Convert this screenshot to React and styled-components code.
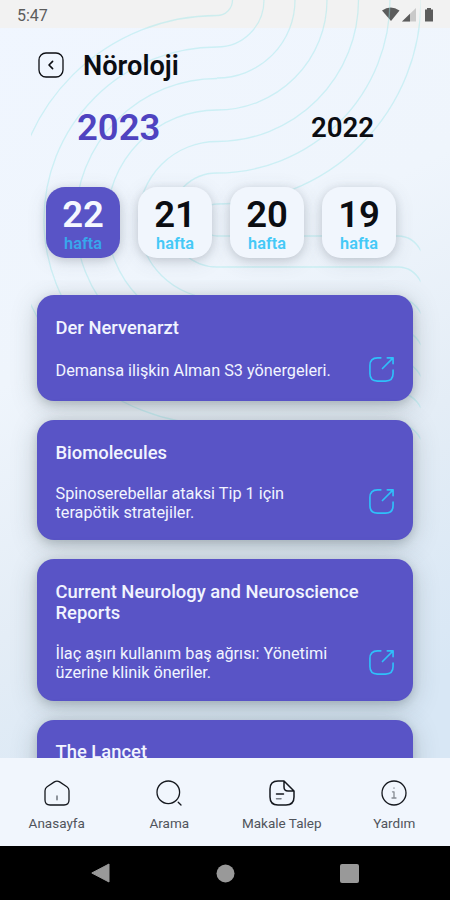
import React from "react";
import styled, { createGlobalStyle, css } from "styled-components";

const colors = {
  purple: "#5954c6",
  year: "#4f43c0",
  cyan: "#2fc0fa",
  ink: "#0b0d12",
  surface: "#f1f6fd",
};

const GlobalStyle = createGlobalStyle`
  * { box-sizing: border-box; }
  body { margin: 0; }
  button { border: 0; padding: 0; background: none; font: inherit; color: inherit; }
`;

const Screen = styled.div`
  position: relative;
  width: 450px;
  height: 900px;
  display: flex;
  flex-direction: column;
  overflow: hidden;
  font-family: Roboto, "Noto Sans", sans-serif;
  color: ${colors.ink};
  background: linear-gradient(152deg, #f0f6ff 0%, #eff5fc 34%, #e4edf6 56%, #d8e7f5 80%);
`;

const Backdrop = styled.svg`
  position: absolute;
  inset: 0;
  pointer-events: none;
`;

const StatusBar = styled.div`
  height: 28px;
  flex: none;
  display: flex;
  align-items: center;
  justify-content: space-between;
  padding: 2px 15px 0 17px;
  font-size: 16px;
  color: #5c5c5c;
  background: #f2f2f2;
`;

const StatusIcons = styled.svg`
  display: block;
  width: 53px;
  height: 16px;
`;

const Header = styled.header`
  position: relative;
  flex: none;
  height: 76px;
  display: flex;
  align-items: center;
  gap: 19px;
  padding: 0 0 0 38px;
`;

const BackButton = styled.button`
  width: 26px;
  height: 26px;
  margin-top: -3px;
  svg { display: block; }
`;

const Title = styled.h1`
  margin: 0;
  font-size: 27.2px;
  font-weight: 600;
  line-height: 32px;
`;

const Years = styled.div`
  position: relative;
  flex: none;
  height: 46px;
  display: flex;
  align-items: center;
  justify-content: space-between;
  padding: 0 76px 0 77px;
`;

const Year = styled.button`
  font-weight: 600;
  font-size: ${(p) => (p.$active ? 36.5 : 27.6)}px;
  color: ${(p) => (p.$active ? colors.year : colors.ink)};
`;

const Weeks = styled.div`
  position: relative;
  flex: none;
  height: 130px;
  margin: 0 37px 0 24px;
  padding: 37px 0 0 22px;
  display: flex;
  gap: 18px;
  overflow: hidden;
`;

const Week = styled.button`
  flex: none;
  width: 74px;
  height: 71px;
  border-radius: 19px;
  display: flex;
  flex-direction: column;
  align-items: center;
  padding-top: 8px;
  background: ${colors.surface};
  box-shadow: 0 2px 8px rgba(70, 80, 90, 0.2), 0 4px 20px rgba(70, 80, 90, 0.13);
  ${(p) =>
    p.$active &&
    css`
      background: ${colors.purple};
      color: #f5f8ff;
    `}
`;

const WeekNumber = styled.span`
  font-size: 36.5px;
  line-height: 40px;
  font-weight: 600;
`;

const WeekLabel = styled.span`
  font-size: 16.3px;
  line-height: 18px;
  font-weight: 600;
  color: ${(p) => (p.$active ? "#38a6ec" : "#45c9f7")};
`;

const Articles = styled.main`
  position: relative;
  flex: 1;
  min-height: 0;
  overflow: hidden;
  padding: 15px 37px 0;
  display: flex;
  flex-direction: column;
  gap: 19px;
`;

const Card = styled.article`
  flex: none;
  border-radius: 17px;
  padding: 21.5px 18px 18.4px 18.5px;
  color: #f1f4ff;
  background: ${colors.purple};
  box-shadow: 0 3px 9px rgba(55, 70, 75, 0.2), 0 5px 26px rgba(55, 70, 75, 0.26);
`;

const CardTitle = styled.h2`
  margin: 0 0 19px;
  font-size: 18.4px;
  line-height: 21.3px;
  font-weight: 500;
  white-space: pre-line;
`;

const CardBody = styled.div`
  display: flex;
  align-items: center;
  justify-content: space-between;
  min-height: 26px;
`;

const Summary = styled.p`
  margin: 0;
  padding-top: 2px;
  font-size: 16.25px;
  line-height: 19px;
  white-space: pre-line;
`;

const OpenButton = styled.button`
  flex: none;
  width: 27px;
  height: 27px;
  margin: -1px 0 -1px 0;
  color: ${colors.cyan};
  svg { display: block; }
`;

const TabBar = styled.nav`
  position: relative;
  flex: none;
  height: 88px;
  display: grid;
  grid-template-columns: repeat(4, 1fr);
  background: ${colors.surface};
`;

const Tab = styled.button`
  display: flex;
  flex-direction: column;
  align-items: center;
  gap: 8px;
  padding: 22px 0 0 1px;
  font-size: 13.5px;
  line-height: 18px;
  white-space: nowrap;
  color: #50545b;
  svg { display: block; color: #15181e; }
`;

const SystemBar = styled.div`
  position: relative;
  flex: none;
  height: 54px;
  background: #000;
  display: flex;
  justify-content: space-between;
  align-items: center;
  padding: 0 91px;
`;

const outline = {
  fill: "none",
  stroke: "currentColor",
  strokeLinecap: "round",
  strokeLinejoin: "round",
};

const DISCS = [15.5, 47, 78, 110, 141.5, 173, 204];
const LOOPS = [204.5, 173, 141.5, 110, 78.5, 47, 16];

function Waves() {
  return (
    <Backdrop width="450" height="900" viewBox="0 0 450 900">
      <defs>
        <clipPath id="waves">
          <rect x="31" y="0" width="389.5" height="500" />
        </clipPath>
      </defs>
      <g clipPath="url(#waves)" fill="none" stroke="#9be6ea" strokeOpacity="0.42" strokeWidth="1.3">
        {DISCS.map((r) => (
          <path key={r} d={`M${217 + r} 0A${r} ${r} 0 0 1 217 ${r}`} />
        ))}
        {LOOPS.map((r) => (
          <path key={r} d={`M217 ${220 - r}A${r} ${r} 0 0 0 217 ${220 + r}H398Q413 ${220 + r} 421 ${235 + r}`} />
        ))}
      </g>
    </Backdrop>
  );
}

const OpenIcon = () => (
  <svg width="27" height="27" viewBox="0 0 28 28" {...outline} strokeWidth="1.7">
    <path d="M13.3 2H9.8Q2 2 2 9.8V18.2Q2 26 9.8 26H18.2Q26 26 26 18.2V14.7M15 13L26 2M20 2H26V8" />
  </svg>
);

const icons = {
  home: (
    <svg width="26" height="26" viewBox="0 0 26 26" {...outline} strokeWidth="1.3">
      <path d="M1 10.7Q1 8.2 3.1 6.8L10.4 1.9Q13 .2 15.6 1.9L22.9 6.8Q25 8.2 25 10.7V20Q25 25 20 25H6Q1 25 1 20Z" />
      <path d="M13 16.2V19.4" stroke="#8d939b" strokeWidth="2" />
    </svg>
  ),
  search: (
    <svg width="26" height="26" viewBox="0 0 26 26" {...outline} strokeWidth="1.3">
      <circle cx="12.3" cy="12.3" r="11.3" />
      <path d="M22.2 22.2L25 25" />
    </svg>
  ),
  article: (
    <svg width="26" height="26" viewBox="0 0 26 26" {...outline} strokeWidth="1.5">
      <path d="M15 1H9Q1 1 1 9V17Q1 25 9 25H17Q25 25 25 17V11L15 1V7Q15 11 19 11H25" />
      <path d="M7.5 14H14.5" />
      <path d="M7.5 18.8H12" stroke="#777d85" />
    </svg>
  ),
  info: (
    <svg width="26" height="26" viewBox="0 0 26 26" {...outline} strokeWidth="1.3">
      <circle cx="13" cy="13" r="12" />
      <path d="M11.5 11.8H13V18M11 18H15M13 8V8.2" stroke="#858a92" />
    </svg>
  ),
};

const WEEKS = [22, 21, 20, 19];

const ARTICLES = [
  { title: "Der Nervenarzt", summary: "Demansa ilişkin Alman S3 yönergeleri." },
  { title: "Biomolecules", summary: "Spinoserebellar ataksi Tip 1 için\nterapötik stratejiler." },
  {
    title: "Current Neurology and Neuroscience\nReports",
    summary: "İlaç aşırı kullanım baş ağrısı: Yönetimi\nüzerine klinik öneriler.",
  },
  { title: "The Lancet", summary: "" },
];

const TABS = [
  { icon: "home", label: "Anasayfa" },
  { icon: "search", label: "Arama" },
  { icon: "article", label: "Makale Talep" },
  { icon: "info", label: "Yardım" },
];

export default function App() {
  return (
    <>
      <GlobalStyle />
      <Screen>
        <StatusBar>
          <span>5:47</span>
          <StatusIcons viewBox="0 0 53 16" fill="#5c5c5c">
            <path d="M0 3.5Q8.5-2.5 17.5 3.5L9 14Z" />
            <path d="M20 14.5L34 1V14.5Z" fill="#c9c9c9" />
            <path d="M20 14.5L28 6.8V14.5Z" />
            <path d="M43 2.5H45V1H49V2.5H51V14.5H43Z" />
          </StatusIcons>
        </StatusBar>
        <Waves />
        <Header>
          <BackButton aria-label="Geri">
            <svg width="26" height="26" viewBox="0 0 26 26" {...outline} strokeWidth="1.3">
              <rect x="1" y="1" width="24" height="24" rx="7" />
              <path d="M14.6 9.4L11 13L14.6 16.6" strokeWidth="1.6" />
            </svg>
          </BackButton>
          <Title>Nöroloji</Title>
        </Header>
        <Years>
          <Year $active>2023</Year>
          <Year>2022</Year>
        </Years>
        <Weeks>
          {WEEKS.map((week, i) => (
            <Week key={week} $active={i === 0}>
              <WeekNumber>{week}</WeekNumber>
              <WeekLabel $active={i === 0}>hafta</WeekLabel>
            </Week>
          ))}
        </Weeks>
        <Articles>
          {ARTICLES.map(({ title, summary }) => (
            <Card key={title}>
              <CardTitle>{title}</CardTitle>
              <CardBody>
                <Summary>{summary}</Summary>
                <OpenButton aria-label="Aç">
                  <OpenIcon />
                </OpenButton>
              </CardBody>
            </Card>
          ))}
        </Articles>
        <TabBar>
          {TABS.map(({ icon, label }) => (
            <Tab key={label}>
              {icons[icon]}
              <span>{label}</span>
            </Tab>
          ))}
        </TabBar>
        <SystemBar>
          <svg width="19" height="20" viewBox="0 0 19 20" fill="#999">
            <path d="M.8 10L18 1V19Z" stroke="#999" strokeLinejoin="round" />
          </svg>
          <svg width="19" height="19" viewBox="0 0 19 19" fill="#999">
            <circle cx="9.5" cy="9.5" r="9" />
          </svg>
          <svg width="19" height="19" viewBox="0 0 19 19" fill="#999">
            <rect width="19" height="19" rx="2" />
          </svg>
        </SystemBar>
      </Screen>
    </>
  );
}
